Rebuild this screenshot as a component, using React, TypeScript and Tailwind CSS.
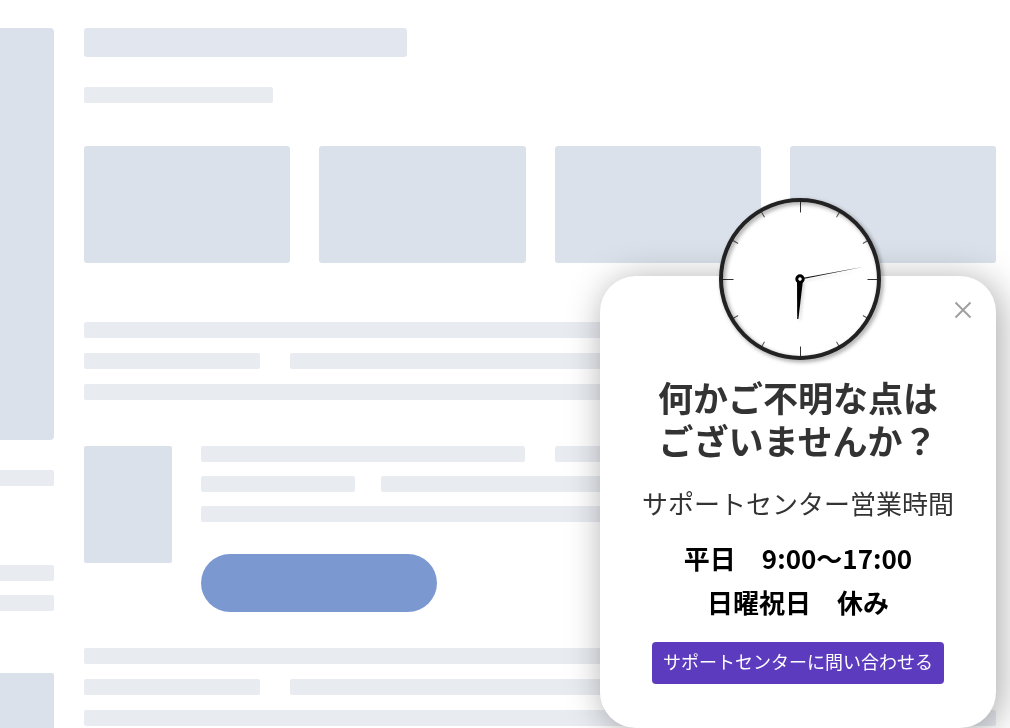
import React from "react";

function Bar({ className = "" }: { className?: string }) {
  return <div className={`h-4 rounded-xs bg-[#e8ebf0] ${className}`} />;
}

function Paragraph() {
  return (
    <div className="flex flex-col gap-[15px]">
      <Bar />
      <div className="flex gap-[30px]">
        <Bar className="w-44" />
        <Bar className="flex-1" />
      </div>
      <Bar />
    </div>
  );
}

function Sidebar() {
  return (
    <aside className="w-[54px] shrink-0" aria-hidden="true">
      <div className="h-[412px] rounded-r bg-[#dae1ea]" />
      <Bar className="mt-[30px] rounded-l-none" />
      <Bar className="mt-[79px] rounded-l-none" />
      <Bar className="mt-[14px] rounded-l-none" />
      <div className="mt-[62px] h-[117px] rounded-tr-xs bg-[#dae1ea]" />
    </aside>
  );
}

function Placeholder() {
  return (
    <main className="min-w-0 flex-1" aria-hidden="true">
      <div className="h-[29px] w-[323px] rounded-[3px] bg-[#e1e6ef]" />
      <Bar className="mt-[30px] w-[189px]" />
      <div className="mt-[43px] grid grid-cols-4 gap-[29px]">
        {[0, 1, 2, 3].map((i) => (
          <div key={i} className="h-[117px] rounded-[3px] bg-[#dae1ea]" />
        ))}
      </div>
      <div className="mt-[59px]">
        <Paragraph />
      </div>
      <div className="mt-[46px] flex gap-[29px]">
        <div className="h-[117px] w-[88px] shrink-0 rounded-xs bg-[#dae1ea]" />
        <div className="flex flex-1 flex-col gap-[14px]">
          <div className="flex gap-[30px]">
            <Bar className="w-[324px]" />
            <Bar className="flex-1" />
          </div>
          <div className="flex gap-[26px]">
            <Bar className="w-[154px]" />
            <Bar className="flex-1" />
          </div>
          <Bar />
          <div className="mt-[18px] h-[58px] w-[236px] rounded-full bg-[#7b98d1]" />
        </div>
      </div>
      <div className="mt-9">
        <Paragraph />
      </div>
    </main>
  );
}

function Clock() {
  const marks = [0, 1, 2, 3, 4, 5, 6, 7, 8, 9, 10, 11];
  return (
    <svg width="170" height="170" viewBox="-87 -83 170 170" className="-mt-20 overflow-visible" role="img" aria-label="時計">
      <defs>
        <filter id="rim" x="-20%" y="-20%" width="140%" height="140%">
          <feDropShadow dx="2" dy="2" stdDeviation="2" floodColor="#000" floodOpacity="0.4" />
        </filter>
        <filter id="hand" x="-100%" y="-50%" width="300%" height="200%">
          <feDropShadow dx="2" dy="2" stdDeviation="1.5" floodColor="#000" floodOpacity="0.15" />
        </filter>
      </defs>
      <circle r="79" fill="#fff" />
      {marks.map((m) => (
        <line
          key={m}
          y1="-78"
          y2={m % 3 === 0 ? -67 : -72}
          stroke={m % 3 === 0 ? "#333" : "#555"}
          strokeWidth="1"
          transform={`translate(.5 .5) rotate(${m * 30})`}
        />
      ))}
      <circle r="79" fill="none" stroke="#212122" strokeWidth="4" filter="url(#rim)" />
      <g filter="url(#hand)">
        <path d="M-3 1 L3 1 L-1.6 40 L-2.8 40 Z" fill="#000" />
        <path d="M2 -.9 L64 -12.2 L2 .2 Z" fill="#111" />
      </g>
      <circle r="3.2" fill="#fff" stroke="#000" strokeWidth="3" />
    </svg>
  );
}

function SupportPopup() {
  return (
    <section
      aria-labelledby="popup-title"
      className="fixed right-[14px] bottom-0 flex w-[396px] flex-col items-center rounded-[36px] bg-white pb-11 text-center shadow-[4px_4px_36px_rgba(0,0,0,0.35)]"
    >
      <Clock />
      <button type="button" aria-label="閉じる" className="absolute top-6 right-[23px] flex size-5 items-center justify-center text-[#a0a0a0]">
        <svg width="18" height="18" viewBox="0 0 18 18" fill="none" stroke="currentColor" strokeWidth="2">
          <path d="M1.5 1.5 L16.5 16.5 M16.5 1.5 L1.5 16.5" />
        </svg>
      </button>
      <h2 id="popup-title" className="mt-[9px] text-[35px] leading-[43px] font-bold text-[#333]">
        何かご不明な点は
        <br />
        ございませんか？
      </h2>
      <p className="mt-[23px] text-[26px] leading-[38px] text-[#333]">サポートセンター営業時間</p>
      <p className="mt-[14px] text-[26px] leading-[44px] font-bold text-black">
        平日　9:00〜17:00
        <br />
        日曜祝日　休み
      </p>
      <button type="button" className="mt-[18px] h-[42px] w-[292px] rounded bg-[#5c3bbf] pb-1 text-[18px] leading-6 font-normal text-white">
        サポートセンターに問い合わせる
      </button>
    </section>
  );
}

export default function App() {
  return (
    <div lang="ja" className="h-screen overflow-hidden bg-white font-['Noto_Sans_CJK_JP',sans-serif]">
      <div className="flex gap-[30px] pt-7 pr-[14px]">
        <Sidebar />
        <Placeholder />
      </div>
      <SupportPopup />
    </div>
  );
}
